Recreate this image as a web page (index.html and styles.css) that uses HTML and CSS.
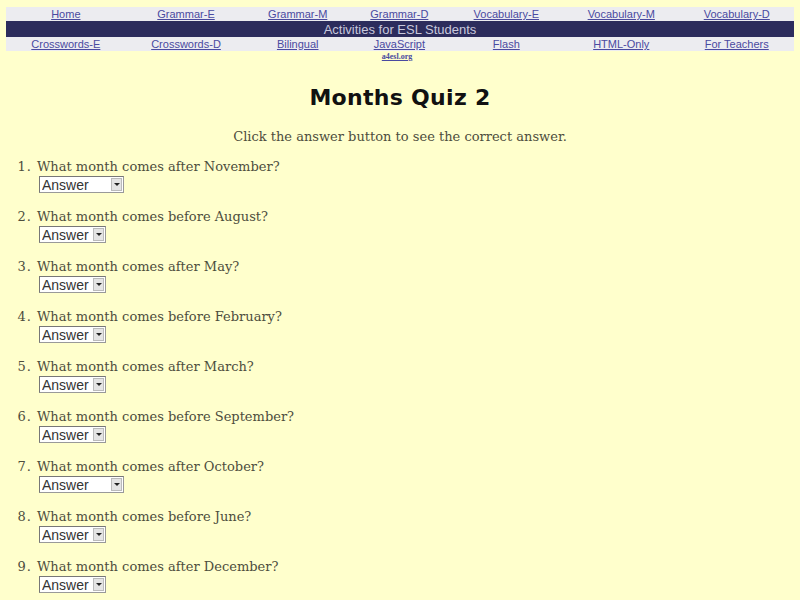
FILE: index.html
```html
<!DOCTYPE html>
<html lang="en">

<head>
    <meta charset="UTF-8">
    <meta name="viewport" content="width=device-width, initial-scale=1.0">
    <title>Months Quiz 2</title>
    <link rel="stylesheet" href="styles.css">
</head>

<body>
    <table class="nav">
        <tr class="nav-row">
            <td><a href="#">Home</a></td>
            <td><a href="#">Grammar-E</a></td>
            <td><a href="#">Grammar-M</a></td>
            <td><a href="#">Grammar-D</a></td>
            <td><a href="#">Vocabulary-E</a></td>
            <td><a href="#">Vocabulary-M</a></td>
            <td><a href="#">Vocabulary-D</a></td>
        </tr>
        <tr class="nav-title">
            <td colspan="7">Activities for ESL Students</td>
        </tr>
        <tr class="nav-row">
            <td><a href="#">Crosswords-E</a></td>
            <td><a href="#">Crosswords-D</a></td>
            <td><a href="#">Bilingual</a></td>
            <td><a href="#">JavaScript</a></td>
            <td><a href="#">Flash</a></td>
            <td><a href="#">HTML-Only</a></td>
            <td><a href="#">For Teachers</a></td>
        </tr>
    </table>
    <div class="site"><a href="#">a4esl.org</a></div>

    <h1>Months Quiz 2</h1>
    <p class="intro">Click the answer button to see the correct answer.</p>

    <ol class="quiz">
        <li>
            <div class="question">What month comes after November?</div>
            <span class="answer wide">
                <select><option>Answer</option><option>December</option></select>
                <span class="arrow"></span>
            </span>
        </li>
        <li>
            <div class="question">What month comes before August?</div>
            <span class="answer">
                <select><option>Answer</option><option>July</option></select>
                <span class="arrow"></span>
            </span>
        </li>
        <li>
            <div class="question">What month comes after May?</div>
            <span class="answer">
                <select><option>Answer</option><option>June</option></select>
                <span class="arrow"></span>
            </span>
        </li>
        <li>
            <div class="question">What month comes before February?</div>
            <span class="answer">
                <select><option>Answer</option><option>January</option></select>
                <span class="arrow"></span>
            </span>
        </li>
        <li>
            <div class="question">What month comes after March?</div>
            <span class="answer">
                <select><option>Answer</option><option>April</option></select>
                <span class="arrow"></span>
            </span>
        </li>
        <li>
            <div class="question">What month comes before September?</div>
            <span class="answer">
                <select><option>Answer</option><option>August</option></select>
                <span class="arrow"></span>
            </span>
        </li>
        <li>
            <div class="question">What month comes after October?</div>
            <span class="answer wide">
                <select><option>Answer</option><option>November</option></select>
                <span class="arrow"></span>
            </span>
        </li>
        <li>
            <div class="question">What month comes before June?</div>
            <span class="answer">
                <select><option>Answer</option><option>May</option></select>
                <span class="arrow"></span>
            </span>
        </li>
        <li>
            <div class="question">What month comes after December?</div>
            <span class="answer">
                <select><option>Answer</option><option>January</option></select>
                <span class="arrow"></span>
            </span>
        </li>
    </ol>
</body>

</html>
```

FILE: styles.css
```css
* {
    padding: 0;
    margin: 0;
}

body {
    background: #ffffcc;
    font-family: "DejaVu Serif", serif;
    color: #4d4d3d;
}

/* top menu */
.nav {
    width: calc(100% - 12px);
    margin: 7px 6px 0;
    border-collapse: collapse;
    font-family: "Liberation Sans", Arial, sans-serif;
    font-size: 11px;
}

.nav td {
    text-align: center;
    padding: 0;
}

.nav-row td {
    background: #ececf0;
    height: 14px;
}

.nav-row a {
    color: #4a4aa0;
}

.nav-title td {
    background: #2c2c5c;
    color: #c8c8dc;
    font-size: 13px;
    height: 16px;
}

.site {
    text-align: center;
    font-family: "Liberation Serif", serif;
    font-size: 8px;
    font-weight: bold;
    margin-left: -6px;
    margin-top: 1px;
}

.site a {
    color: #4a4aa0;
}

h1 {
    font-family: "DejaVu Sans", sans-serif;
    font-size: 22px;
    color: #111;
    text-align: center;
    margin-top: 24px;
    letter-spacing: 0.3px;
}

.intro {
    text-align: center;
    font-size: 13px;
    margin-top: 19px;
}

/* questions */
.quiz {
    padding-left: 37px;
    margin-top: 15px;
    font-size: 13px;
}

.quiz li {
    height: 50px;
}

.quiz li::marker {
    letter-spacing: 1px;
}

.question {
    line-height: 16px;
}

.answer {
    display: inline-flex;
    align-items: center;
    margin-left: 2px;
    margin-top: 1px;
    width: 67px;
    height: 17px;
    background: #fff;
    border: 1px solid #999;
    border-top-color: #777;
    border-left-color: #777;
    box-sizing: border-box;
}

.answer.wide {
    width: 85px;
}

.answer select {
    appearance: none;
    -webkit-appearance: none;
    border: none;
    background: transparent;
    flex: 1;
    min-width: 0;
    font-family: "Liberation Sans", Arial, sans-serif;
    font-size: 14px;
    color: #333;
    padding-left: 2px;
    outline: none;
}

.arrow {
    width: 11px;
    height: 13px;
    margin-right: 1px;
    background: #e4e4e4;
    border: 1px solid #bbb;
    box-sizing: border-box;
    display: flex;
    align-items: center;
    justify-content: center;
}

.arrow::after {
    content: "";
    border-left: 3px solid transparent;
    border-right: 3px solid transparent;
    border-top: 3px solid #222;
}
```
